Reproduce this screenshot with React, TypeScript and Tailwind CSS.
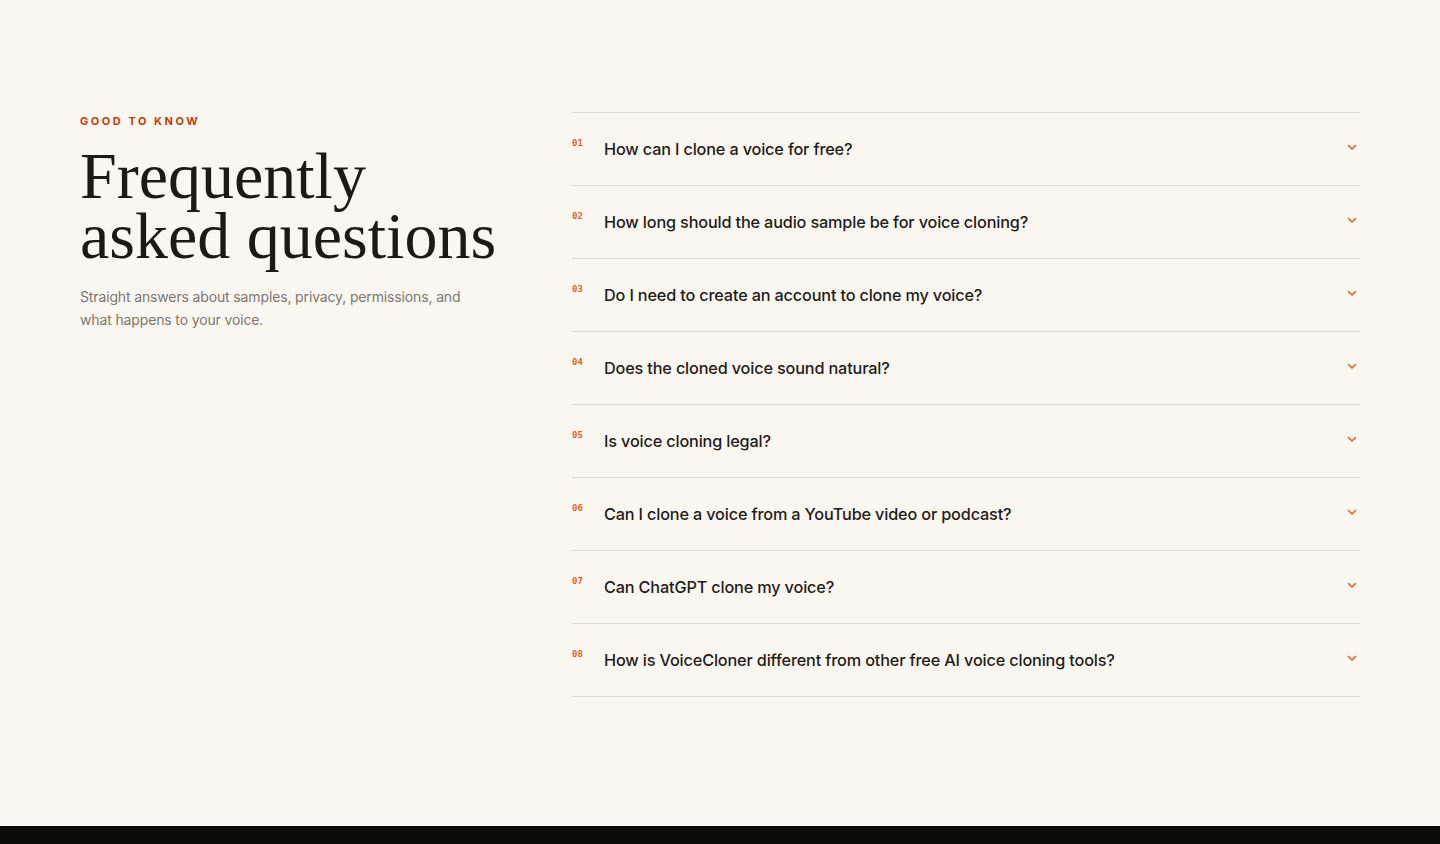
import React from "react";

const faqs = [
  "How can I clone a voice for free?",
  "How long should the audio sample be for voice cloning?",
  "Do I need to create an account to clone my voice?",
  "Does the cloned voice sound natural?",
  "Is voice cloning legal?",
  "Can I clone a voice from a YouTube video or podcast?",
  "Can ChatGPT clone my voice?",
  "How is VoiceCloner different from other free AI voice cloning tools?",
];

export default function App() {
  return (
    <div className="min-h-[844px] bg-[#faf7f0] flex flex-col" style={{ fontFamily: "Inter, 'Noto Sans', sans-serif" }}>
      <section className="flex-1 flex gap-[58px] pl-[80px] pr-[80px] pt-[112px] pb-[129px]">
        <div className="w-[434px] shrink-0 pt-[3px]">
          <p className="text-[11px] font-bold tracking-[0.23em] text-[#c2410c] leading-[12px]">GOOD TO KNOW</p>
          <h2
            className="mt-[19px] text-[66px] leading-[60px] text-[#1c1a17] whitespace-nowrap"
            style={{ fontFamily: "'Liberation Serif', 'DejaVu Serif', serif" }}
          >
            <span className="block">Frequently</span>
            <span className="block">asked questions</span>
          </h2>
          <p className="mt-[19px] text-[14px] leading-[23px] text-[#7d7871] max-w-[400px] tracking-[-0.01em]">
            Straight answers about samples, privacy, permissions, and what happens to your voice.
          </p>
        </div>
        <div className="flex-1 border-t border-[#dedad2]">
          {faqs.map((q, i) => (
            <div key={i} className="h-[73px] border-b border-[#dedad2] flex items-center">
              <span
                className="w-[32px] shrink-0 self-start mt-[24px] text-[9px] font-bold text-[#e0622a]"
                style={{ fontFamily: "'DejaVu Sans Mono', 'Liberation Mono', monospace" }}
              >
                {String(i + 1).padStart(2, "0")}
              </span>
              <span className="flex-1 text-[16.25px] font-medium text-[#1f1d1a] tracking-[-0.01em]">{q}</span>
              <svg width="12" height="12" viewBox="0 0 12 12" className="mr-[2px] -mt-[4px]" fill="none">
                <path d="M2.5 4.5 L6 8 L9.5 4.5" stroke="#e0622a" strokeWidth="1.6" strokeLinecap="round" strokeLinejoin="round" />
              </svg>
            </div>
          ))}
        </div>
      </section>
      <footer className="h-[19px] bg-[#0b0b0a]" />
    </div>
  );
}
